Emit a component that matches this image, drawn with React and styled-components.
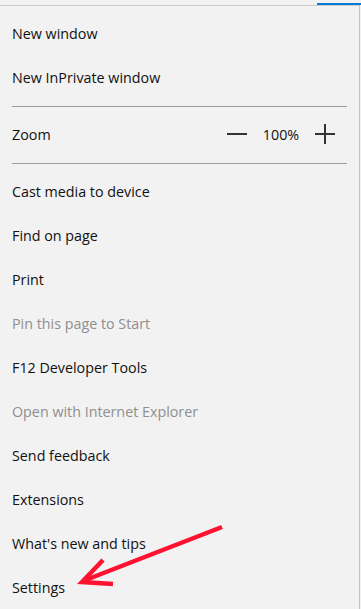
import React from "react";
import styled, { createGlobalStyle } from "styled-components";

const GlobalStyle = createGlobalStyle`
  html, body {
    margin: 0;
    padding: 0;
    background: #f2f2f2;
  }
  body {
    font-family: "Segoe UI", "Open Sans", "Liberation Sans", sans-serif;
  }
`;

const menuItems = [
  { label: "Cast media to device" },
  { label: "Find on page" },
  { label: "Print" },
  { label: "Pin this page to Start", disabled: true },
  { label: "F12 Developer Tools" },
  { label: "Open with Internet Explorer", disabled: true },
  { label: "Send feedback" },
  { label: "Extensions" },
  { label: "What's new and tips" },
  { label: "Settings" },
];

function App() {
  return (
    <Screen>
      <GlobalStyle />
      <TopStrip>
        <ActiveTab />
      </TopStrip>
      <Menu>
        <Item>New window</Item>
        <Item>New InPrivate window</Item>
        <Separator />
        <Item>
          Zoom
          <ZoomControls>
            <ZoomButton aria-label="Zoom out">
              <svg width="20" height="20" viewBox="0 0 20 20">
                <path d="M0 10 H20" stroke="#333" strokeWidth="2" />
              </svg>
            </ZoomButton>
            <ZoomValue>100%</ZoomValue>
            <ZoomButton aria-label="Zoom in">
              <svg width="20" height="20" viewBox="0 0 20 20">
                <path d="M0 10 H20 M10 0 V20" stroke="#333" strokeWidth="2" />
              </svg>
            </ZoomButton>
          </ZoomControls>
        </Item>
        <Separator />
        {menuItems.map((item) => (
          <Item key={item.label} disabled={item.disabled}>
            {item.label}
          </Item>
        ))}
      </Menu>
      <Arrow width="361" height="609" viewBox="0 0 361 609">
        <g stroke="#fe1230" strokeWidth="4.5" strokeLinecap="butt" fill="none">
          <path d="M222 527 L83 581" />
          <path d="M103 560 L82 582 L113 584" strokeLinejoin="miter" />
        </g>
      </Arrow>
    </Screen>
  );
}

export default App;

const Screen = styled.div`
  position: relative;
  width: 361px;
  height: 609px;
  overflow: hidden;
  background: #f2f2f2;
`;

const TopStrip = styled.div`
  height: 5px;
  display: flex;
  justify-content: flex-end;
  align-items: flex-end;
`;

const ActiveTab = styled.div`
  width: 44px;
  height: 2px;
  background: #0a78d4;
`;

const Menu = styled.div`
  width: 360px;
  box-sizing: border-box;
  border-top: 1px solid #cdcdcd;
  border-right: 1px solid #c4c4c4;
  padding-top: 5px;
  height: 604px;
`;

const Item = styled.div`
  height: 44px;
  display: flex;
  align-items: center;
  padding: 0 12px;
  font-size: 14.3px;
  color: ${(p) => (p.disabled ? "#8f8f8f" : "#111")};
`;

const Separator = styled.div`
  height: 1px;
  margin: 7px 12px 5px 12px;
  background: #9a9a9a;
`;

const ZoomControls = styled.div`
  margin-left: auto;
  margin-right: 12px;
  display: flex;
  align-items: center;
`;

const ZoomButton = styled.span`
  display: flex;
  width: 20px;
  height: 20px;
`;

const ZoomValue = styled.span`
  width: 68px;
  text-align: center;
  font-size: 14.3px;
  color: #111;
`;

const Arrow = styled.svg`
  position: absolute;
  left: 0;
  top: 0;
  pointer-events: none;
`;
